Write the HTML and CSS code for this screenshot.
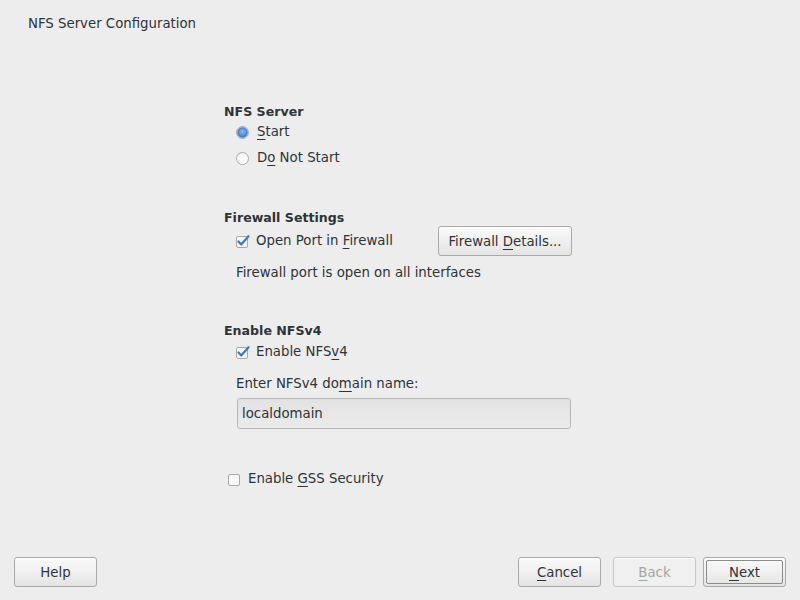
FILE: index.html
```html
<!DOCTYPE html>
<html>
<head>
<meta charset="utf-8">
<link rel="stylesheet" href="styles.css">
</head>
<body>
<div class="window">
  <div class="title">NFS Server Configuration</div>
  <div class="content">
    <div class="section s1">
      <div class="heading">NFS Server</div>
      <div class="list">
        <div class="row">
          <svg class="radio" width="13" height="13" viewBox="0 0 13 13">
            <defs>
              <radialGradient id="rb" cx="50%" cy="40%" r="60%">
                <stop offset="0" stop-color="#8ab8f0"/>
                <stop offset="1" stop-color="#3b7fd6"/>
              </radialGradient>
            </defs>
            <circle cx="6.5" cy="6.5" r="6" fill="#e6e6e6" stroke="#a8aaa6"/>
            <circle cx="6.5" cy="6.5" r="4.8" fill="url(#rb)" stroke="#2f6ac0" stroke-width="0.8"/>
          </svg>
          <span class="label"><u>S</u>tart</span>
        </div>
        <div class="row">
          <svg class="radio" width="13" height="13" viewBox="0 0 13 13">
            <defs>
              <linearGradient id="rw" x1="0" y1="0" x2="0" y2="1">
                <stop offset="0" stop-color="#f4f4f4"/>
                <stop offset="1" stop-color="#ffffff"/>
              </linearGradient>
            </defs>
            <circle cx="6.5" cy="6.5" r="6" fill="url(#rw)" stroke="#a8aaa6"/>
          </svg>
          <span class="label">D<u>o</u> Not Start</span>
        </div>
      </div>
    </div>

    <div class="section s2">
      <div class="heading">Firewall Settings</div>
      <div class="fw-row">
        <div class="row">
          <svg class="check" width="14" height="13" viewBox="0 0 14 13">
            <rect x="0.5" y="1.5" width="11" height="11" rx="1.5" fill="#f6f6f6" stroke="#a8aaa6"/>
            <path d="M2.5 6.5 L5.2 9.4 L12.5 1.2" fill="none" stroke="#3b78d0" stroke-width="2.2" stroke-linecap="round" stroke-linejoin="round"/>
          </svg>
          <span class="label">Open Port in <u>F</u>irewall</span>
        </div>
        <button class="btn fw-btn">Firewall <u>D</u>etails...</button>
      </div>
      <div class="info">Firewall port is open on all interfaces</div>
    </div>

    <div class="section s3">
      <div class="heading">Enable NFSv4</div>
      <div class="row r3">
        <svg class="check" width="14" height="13" viewBox="0 0 14 13">
          <rect x="0.5" y="1.5" width="11" height="11" rx="1.5" fill="#f6f6f6" stroke="#a8aaa6"/>
          <path d="M2.5 6.5 L5.2 9.4 L12.5 1.2" fill="none" stroke="#3b78d0" stroke-width="2.2" stroke-linecap="round" stroke-linejoin="round"/>
        </svg>
        <span class="label">Enable NFS<u>v</u>4</span>
      </div>
      <div class="info domain-label">Enter NFSv4 do<u>m</u>ain name:</div>
      <div class="input">localdomain</div>
    </div>

    <div class="row gss">
      <svg class="check" width="14" height="13" viewBox="0 0 14 13">
        <rect x="0.5" y="1.5" width="11" height="11" rx="1.5" fill="#f8f8f8" stroke="#a8aaa6"/>
      </svg>
      <span class="label">Enable <u>G</u>SS Security</span>
    </div>
  </div>

  <div class="footer">
    <button class="btn">Help</button>
    <div class="spacer"></div>
    <button class="btn"><u>C</u>ancel</button>
    <button class="btn disabled back"><u>B</u>ack</button>
    <button class="btn next"><span class="focus"><u>N</u>ext</span></button>
  </div>
</div>
</body>
</html>
```

FILE: styles.css
```css
html, body {
  margin: 0;
  padding: 0;
  background: #ededed;
}
body {
  font-family: "DejaVu Sans", sans-serif;
  font-size: 13.3px;
  color: #2e3436;
}
u {
  text-decoration-thickness: 1px;
  text-underline-offset: 3px;
}
.window {
  width: 800px;
  height: 600px;
  display: flex;
  flex-direction: column;
}
.title {
  padding: 16px 0 0 28px;
  line-height: 16px;
  height: 16px;
}
.content {
  flex: 1;
  padding-left: 224px;
  padding-top: 71px;
}
.heading {
  font-weight: bold;
  font-size: 12.6px;
  line-height: 18px;
  height: 18px;
}
.list {
  display: flex;
  flex-direction: column;
  gap: 4px;
  padding-left: 12px;
}
.row {
  display: flex;
  align-items: center;
  height: 22px;
}
.radio {
  margin-right: 8px;
}
.check {
  margin-right: 6px;
}
.label {
  line-height: 18px;
}
.s2 {
  margin-top: 40px;
}
.fw-row {
  display: flex;
  align-items: center;
  padding-left: 12px;
  width: 336px;
  justify-content: space-between;
  height: 30px;
  margin-top: -1px;
}
.info {
  padding-left: 12px;
  line-height: 18px;
  margin-top: 8px;
}
.s3 {
  margin-top: 40px;
}
.r3 {
  padding-left: 12px;
  margin-top: 1px;
}
.domain-label {
  margin-top: 12px;
}
.input {
  margin-left: 13px;
  margin-top: 5px;
  width: 328px;
  height: 29px;
  line-height: 29px;
  padding-left: 4px;
  border: 1px solid #b8b9b6;
  border-radius: 3px;
  background: linear-gradient(#e2e2e2, #ebebeb);
}
.gss {
  margin-top: 39px;
  padding-left: 4px;
}
.btn {
  font-family: "DejaVu Sans", sans-serif;
  font-size: 13.3px;
  color: #2e3436;
  width: 83px;
  height: 30px;
  padding: 0;
  border: 1px solid #a8aaa6;
  border-radius: 3px;
  background: linear-gradient(#fafafa, #e4e4e4);
  box-shadow: inset 0 1px 0 #ffffff;
}
.fw-btn {
  width: 134px;
  height: 30px;
}
.footer {
  display: flex;
  align-items: center;
  padding: 0 14px 13px 14px;
  gap: 12px;
}
.spacer {
  flex: 1;
}
.disabled {
  color: #a4a6a2;
  border-color: #c8c9c6;
  background: #f0f0f0;
}
.next {
  margin-left: -5px;
  padding: 2px;
}
.focus {
  display: flex;
  align-items: center;
  justify-content: center;
  height: 100%;
  border: 1px solid #8a8c88;
  border-radius: 2px;
  box-sizing: border-box;
}
```
